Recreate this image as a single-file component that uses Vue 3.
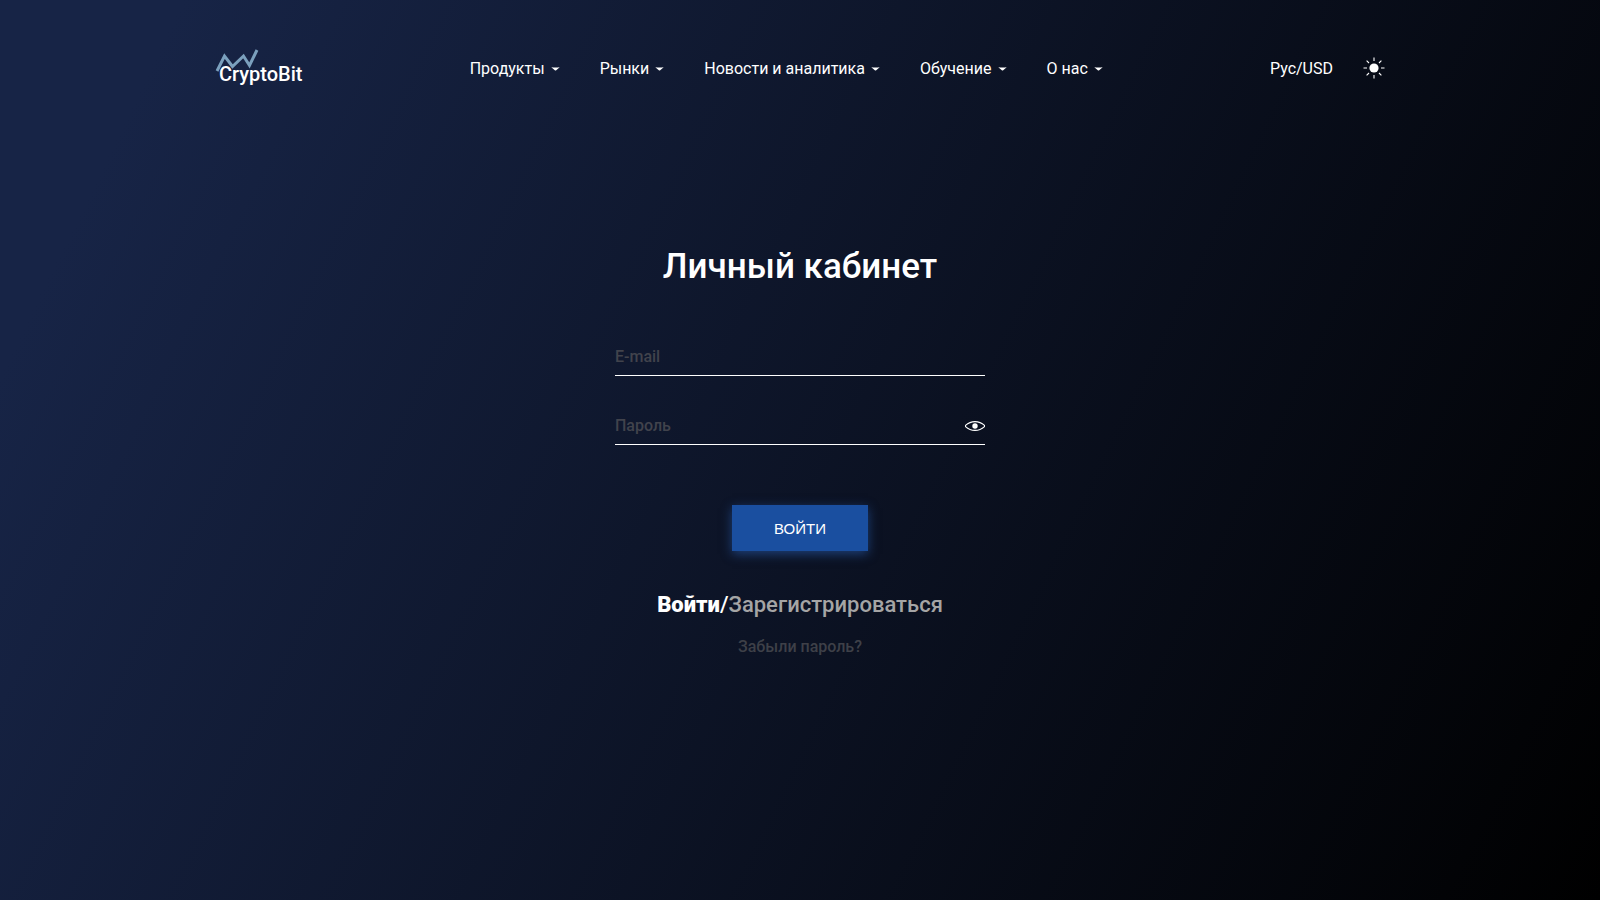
<template>
  <div class="page">
    <header class="header">
      <!-- Логотип -->
      <a class="logo" href="#">
        <svg class="logo__chart" width="44" height="25" viewBox="0 0 44 25" aria-hidden="true">
          <path d="M2 23 L9.5 8 L17.5 18.5 L28.5 8 L34.5 17.5 L42 2" />
        </svg>
        <span class="logo__name">CryptoBit</span>
      </a>

      <!-- Меню -->
      <nav class="nav">
        <button v-for="item in menu" :key="item" type="button" class="nav__item">
          {{ item }}
          <svg width="9" height="4" viewBox="0 0 9 4" aria-hidden="true">
            <path d="M0.3 0.3 Q4.5 0.9 8.7 0.3 L5.2 3.3 Q4.5 3.9 3.8 3.3 Z" fill="#fff" />
          </svg>
        </button>
      </nav>

      <div class="settings">
        <button type="button" class="settings__lang">Рус/USD</button>
        <button type="button" class="settings__theme" aria-label="Тема">
          <svg width="22" height="22" viewBox="0 0 22 22" aria-hidden="true">
            <circle cx="11" cy="11" r="4.6" fill="#fff" />
            <path
              d="M11 0.5 V4 M11 18 V21.5 M0.5 11 H4 M18 11 H21.5 M3.6 3.6 L6 6 M16 16 L18.4 18.4 M18.4 3.6 L16 6 M6 16 L3.6 18.4"
              stroke="#fff"
              stroke-width="1.1"
            />
          </svg>
        </button>
      </div>
    </header>

    <main class="login">
      <h1 class="login__title">Личный кабинет</h1>

      <form class="form" @submit.prevent>
        <div class="field">
          <input v-model="email" class="field__input" type="email" placeholder="E-mail" aria-label="E-mail" />
        </div>
        <div class="field">
          <input
            v-model="password"
            class="field__input"
            :type="showPassword ? 'text' : 'password'"
            placeholder="Пароль"
            aria-label="Пароль"
          />
          <button
            type="button"
            class="field__eye"
            aria-label="Показать пароль"
            @click="showPassword = !showPassword"
          >
            <svg width="20" height="10" viewBox="0 0 20 10" aria-hidden="true">
              <path
                d="M0.5 4.4 C3.5 1.7 6.5 0.6 10 0.6 C13.5 0.6 16.5 1.7 19.5 4.4 V5.6 C16.5 8.3 13.5 9.4 10 9.4 C6.5 9.4 3.5 8.3 0.5 5.6 Z"
                fill="none"
                stroke="#fff"
                stroke-width="1.1"
              />
              <circle cx="10" cy="5" r="2.7" fill="#fff" />
            </svg>
          </button>
        </div>
        <button type="submit" class="form__submit">ВОЙТИ</button>
      </form>

      <div class="switch">
        <a class="switch__active" href="#">Войти</a><span>/</span><a class="switch__other" href="#">Зарегистрироваться</a>
      </div>
      <a class="login__forgot" href="#">Забыли пароль?</a>
    </main>
  </div>
</template>

<script setup>
import { ref } from 'vue'

const menu = ['Продукты', 'Рынки', 'Новости и аналитика', 'Обучение', 'О нас']

const email = ref('')
const password = ref('')
const showPassword = ref(false)
</script>

<style>
body {
  margin: 0;
  background: #000;
}
</style>

<style scoped>
.page {
  min-height: 100vh;
  box-sizing: border-box;
  padding: 48px 24px;
  background: linear-gradient(116deg, #172446 9%, #000 100%);
  color: #fff;
  font-family: Roboto, sans-serif;
  font-size: 16px;
  line-height: 20px;
}

button {
  padding: 0;
  border: none;
  background: none;
  color: inherit;
  font: inherit;
  cursor: pointer;
}

a {
  color: inherit;
  text-decoration: none;
}

svg {
  display: block;
}

/* Шапка */
.header {
  display: flex;
  align-items: center;
  justify-content: space-between;
  max-width: 1170px;
  height: 40px;
  margin: 0 auto;
}

.logo {
  position: relative;
  padding: 12px 0 0 4px;
}

.logo__chart {
  position: absolute;
  top: 0;
  left: 0;
  fill: none;
  stroke: #7ba0bd;
  stroke-width: 3;
}

.logo__name {
  position: relative;
  font-size: 20px;
  font-weight: 500;
  line-height: 28px;
}

.nav {
  display: flex;
  gap: 40px;
}

.nav__item,
.settings__lang {
  display: flex;
  align-items: center;
  gap: 6px;
  padding-top: 1px;
  white-space: nowrap;
}

.settings {
  display: flex;
  align-items: center;
  gap: 30px;
}

/* Форма входа */
.login {
  display: flex;
  flex-direction: column;
  align-items: center;
  padding-top: 157px;
}

.login__title {
  margin: 0 0 59px;
  font-size: 35px;
  font-weight: 500;
  line-height: 44px;
}

.form {
  display: flex;
  flex-direction: column;
  align-items: center;
  width: 100%;
  max-width: 370px;
}

.field {
  display: flex;
  align-items: center;
  width: 100%;
  height: 27px;
  margin-bottom: 41px;
  border-bottom: 1px solid #fff;
}

.field__input {
  flex: 1;
  min-width: 0;
  height: 20px;
  margin-bottom: 10px;
  padding: 0;
  border: none;
  outline: none;
  background: none;
  color: #fff;
  font: inherit;
  font-weight: 500;
}

.field__input::placeholder {
  color: #41434c;
  opacity: 1;
}

.field__eye {
  margin-bottom: 10px;
}

.form__submit {
  width: 136px;
  height: 46px;
  margin-top: 19px;
  padding-top: 2px;
  background: #1a4fa0;
  box-shadow: 0 3px 10px rgba(40, 94, 176, 0.6);
  font-family: "Liberation Sans", Arial, sans-serif;
  font-size: 15px;
}

.switch {
  margin-top: 40px;
  font-size: 22px;
  font-weight: 500;
  line-height: 28px;
}

.switch__active {
  font-weight: 900;
}

.switch__other {
  color: #a5a5a5;
}

.login__forgot {
  margin-top: 18px;
  color: #3e4048;
  font-weight: 500;
}
</style>
